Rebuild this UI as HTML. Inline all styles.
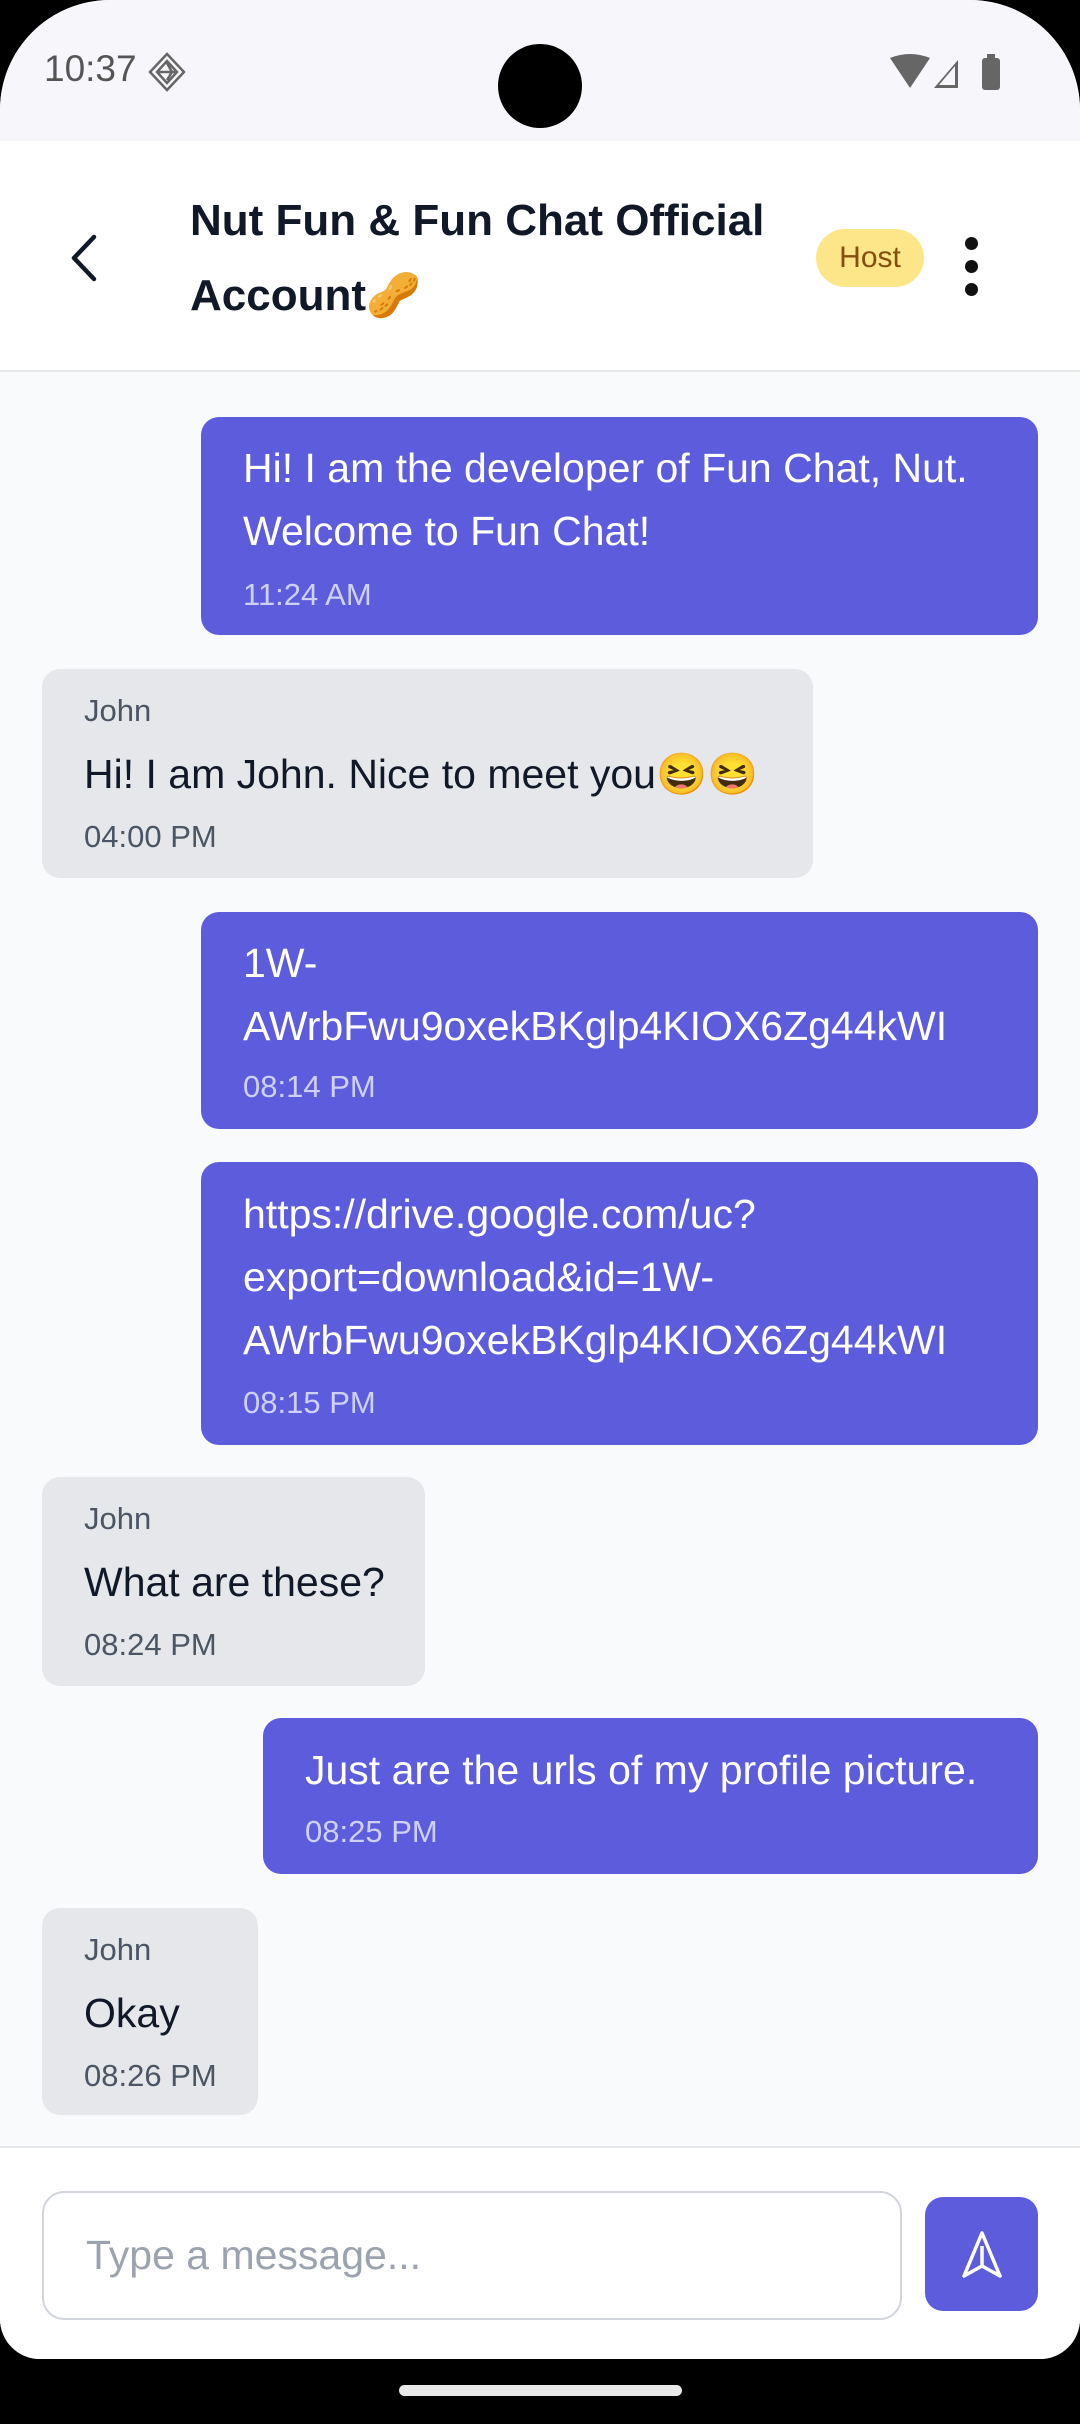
<!DOCTYPE html>
<html><head><meta charset="utf-8">
<style>
*{margin:0;padding:0;box-sizing:border-box}
body{width:1080px;height:2424px;background:#000;position:relative;overflow:hidden;font-family:"Liberation Sans","Noto Color Emoji",sans-serif}
.screen{position:absolute;left:0;top:0;width:1080px;height:2359px;background:#f9fafb;border-radius:110px 110px 40px 40px;overflow:hidden}
.status{position:absolute;left:0;top:0;width:1080px;height:141px;background:#f7f7fb}
.header{position:absolute;left:0;top:141px;width:1080px;height:231px;background:#fff;border-bottom:2px solid #e5e7eb}
.title{position:absolute;left:190px;top:42px;font-size:44px;font-weight:bold;color:#111827;line-height:75px}
.host{position:absolute;left:816px;top:88px;width:108px;height:58px;border-radius:29px;background:#fde68a;color:#854d0e;font-size:30px;line-height:58px;text-align:center}
.b{position:absolute;border-radius:18px;padding-left:42px;white-space:nowrap}
.s{background:#5d5cdd;color:#fff}
.r{background:#e5e7eb;color:#111827}
.t{position:absolute;left:42px;font-size:41px;line-height:63px}
.tm{position:absolute;left:42px;font-size:31px}
.s .tm{color:#cfd0f7}
.r .tm{color:#4b5563}
.nm{position:absolute;left:42px;font-size:31px;color:#4b5563}
.footer{position:absolute;left:0;top:2146px;width:1080px;height:213px;background:#fff;border-top:2px solid #e5e7eb}
</style></head><body>
<div class="screen">
<div class="status">
<div style="position:absolute;left:44px;top:48px;font-size:37px;color:#555">10:37</div>
<svg style="position:absolute;left:147px;top:52px" width="40" height="40" viewBox="0 0 40 40"><path d="M20 2 L37 20 L20 38 L3 20Z M20 9 L30 20 L20 31 L10 20Z M12 20 H28 M20 11 L25 20 L20 28" fill="none" stroke="#666" stroke-width="2.5"/></svg>
<div style="position:absolute;left:498px;top:44px;width:84px;height:84px;border-radius:50%;background:#000"></div>
<svg style="position:absolute;left:890px;top:54px" width="112" height="36" viewBox="0 0 112 36"><path d="M0 4 Q20 -4 40 4 L20 34Z" fill="#666"/><path d="M44 34 L68 6 V34Z M49 31 L65 12 V31Z" fill="#666" fill-rule="evenodd"/><rect x="92" y="4" width="18" height="32" rx="3" fill="#666"/><rect x="97" y="0" width="8" height="5" fill="#666"/></svg>
</div>
<div class="header">
<svg style="position:absolute;left:66px;top:92px" width="34" height="50" viewBox="0 0 34 50"><path d="M28 4 L8 25 L28 46" fill="none" stroke="#111827" stroke-width="4.5" stroke-linecap="round" stroke-linejoin="round"/></svg>
<div class="title">Nut Fun &amp; Fun Chat Official<br>Account🥜</div>
<div class="host">Host</div>
<div style="position:absolute;left:965px;top:96px;width:13px;height:13px;border-radius:50%;background:#111"></div>
<div style="position:absolute;left:965px;top:119px;width:13px;height:13px;border-radius:50%;background:#111"></div>
<div style="position:absolute;left:965px;top:142px;width:13px;height:13px;border-radius:50%;background:#111"></div>
</div>

<div class="b s" style="left:201px;top:417px;width:837px;height:218px">
<div class="t" style="top:20px">Hi! I am the developer of Fun Chat, Nut.<br>Welcome to Fun Chat!</div>
<div class="tm" style="top:160px">11:24 AM</div></div>

<div class="b r" style="left:42px;top:669px;width:771px;height:209px">
<div class="nm" style="top:24px">John</div>
<div class="t" style="top:74px">Hi! I am John. Nice to meet you😆😆</div>
<div class="tm" style="top:150px">04:00 PM</div></div>

<div class="b s" style="left:201px;top:912px;width:837px;height:217px">
<div class="t" style="top:20px">1W-<br>AWrbFwu9oxekBKglp4KIOX6Zg44kWI</div>
<div class="tm" style="top:157px">08:14 PM</div></div>

<div class="b s" style="left:201px;top:1162px;width:837px;height:283px">
<div class="t" style="top:21px">https://drive.google.com/uc?<br>export=download&amp;id=1W-<br>AWrbFwu9oxekBKglp4KIOX6Zg44kWI</div>
<div class="tm" style="top:223px">08:15 PM</div></div>

<div class="b r" style="left:42px;top:1477px;width:383px;height:209px">
<div class="nm" style="top:24px">John</div>
<div class="t" style="top:74px">What are these?</div>
<div class="tm" style="top:150px">08:24 PM</div></div>

<div class="b s" style="left:263px;top:1718px;width:775px;height:156px">
<div class="t" style="top:21px">Just are the urls of my profile picture.</div>
<div class="tm" style="top:96px">08:25 PM</div></div>

<div class="b r" style="left:42px;top:1908px;width:216px;height:207px">
<div class="nm" style="top:24px">John</div>
<div class="t" style="top:74px">Okay</div>
<div class="tm" style="top:150px">08:26 PM</div></div>

<div class="footer">
<div style="position:absolute;left:42px;top:43px;width:860px;height:129px;border:2px solid #d1d5db;border-radius:22px;background:#fff"></div>
<div style="position:absolute;left:86px;top:84px;font-size:41px;color:#9ca3af">Type a message...</div>
<div style="position:absolute;left:925px;top:49px;width:113px;height:114px;border-radius:18px;background:#5d5cdd"></div>
<svg style="position:absolute;left:956px;top:82px" width="52" height="50" viewBox="0 0 52 50"><path d="M26 3 L44 46 L26 36 L8 46Z M26 16 V36" fill="none" stroke="#fff" stroke-width="3.5" stroke-linejoin="round"/></svg>
</div>
</div>
<div style="position:absolute;left:399px;top:2385px;width:283px;height:11px;border-radius:6px;background:#e8e8e8"></div>
</body></html>
